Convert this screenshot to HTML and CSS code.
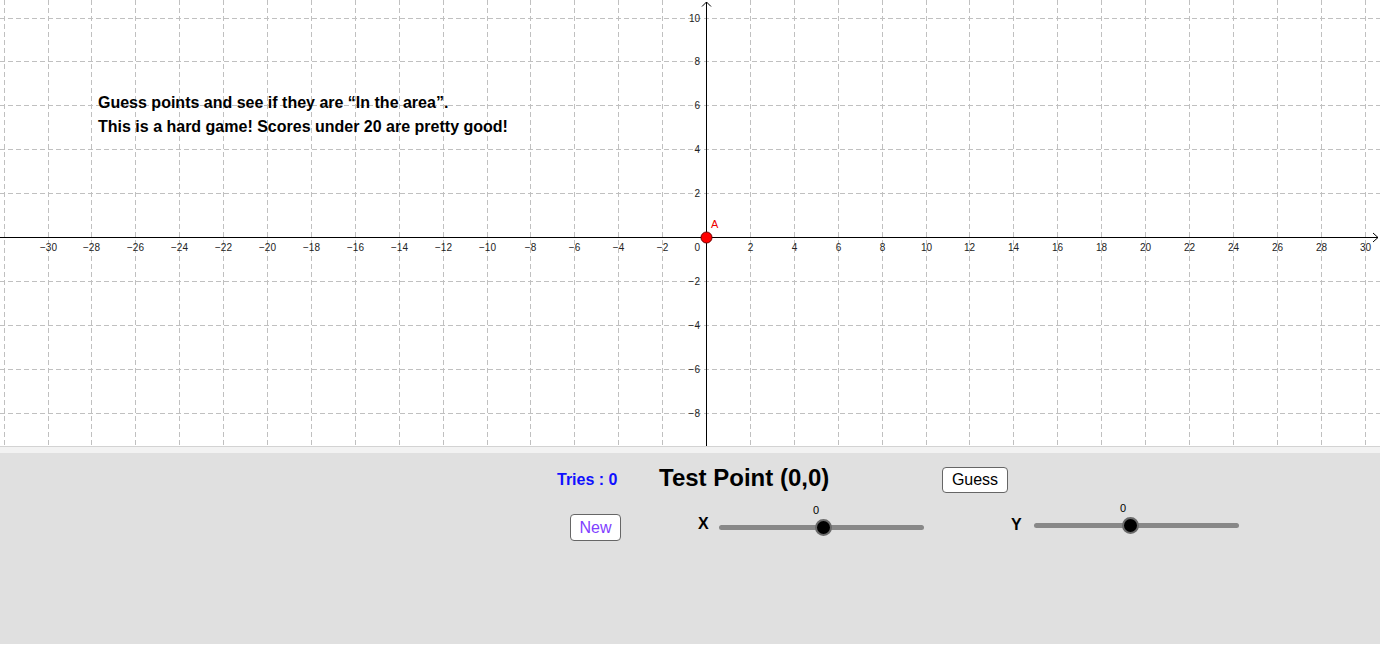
FILE: index.html
```html
<!DOCTYPE html>
<html lang="en">
<head>
  <meta charset="UTF-8">
  <meta name="viewport" content="width=device-width, initial-scale=1.0">
  <title>In the Area</title>
  <link rel="stylesheet" href="styles.css">
</head>
<body>
  <div class="applet">
    <svg class="graph" id="graph" width="1380" height="446" xmlns="http://www.w3.org/2000/svg">
      <g id="grid"></g>
      <g id="axes" stroke="#000" stroke-width="1" fill="none">
        <line x1="0" y1="237.5" x2="1378" y2="237.5"></line>
        <polyline points="1373,233 1378,237.5 1373,242"></polyline>
        <line x1="706.5" y1="2" x2="706.5" y2="446"></line>
        <polyline points="702,6.5 706.5,2 711,6.5"></polyline>
      </g>
      <g id="labels" class="tick-label"></g>
      <circle cx="706.5" cy="237.5" r="5.5" fill="#f00" stroke="#6b0000" stroke-width="1"></circle>
      <text x="711" y="228" class="point-label">A</text>
      <text x="98" y="108" class="intro">Guess points and see if they are “In the area”.</text>
      <text x="98" y="132" class="intro">This is a hard game! Scores under 20 are pretty good!</text>
    </svg>

    <div class="strip"></div>

    <div class="panel">
      <div class="row row-top">
        <span class="tries">Tries : 0</span>
        <span class="title">Test Point (0,0)</span>
        <button class="btn btn-guess">Guess</button>
      </div>

      <div class="row row-bottom">
        <button class="btn btn-new">New</button>
        <span class="axis-name axis-x">X</span>
        <div class="slider slider-x">
          <span class="slider-value">0</span>
          <span class="knob"></span>
        </div>
        <span class="axis-name axis-y">Y</span>
        <div class="slider slider-y">
          <span class="slider-value">0</span>
          <span class="knob"></span>
        </div>
      </div>
    </div>
  </div>

  <script>
    // Build the dashed grid and the tick labels
    const NS = 'http://www.w3.org/2000/svg';
    const ox = 706.5, oy = 237.5, step = 43.9;
    const grid = document.getElementById('grid');
    const labels = document.getElementById('labels');

    function add(parent, tag, attrs, text) {
      const el = document.createElementNS(NS, tag);
      for (const k in attrs) el.setAttribute(k, attrs[k]);
      if (text !== undefined) el.textContent = text;
      parent.appendChild(el);
      return el;
    }

    function num(v) {
      return v < 0 ? '\u2212' + Math.abs(v) : String(v);
    }

    for (let k = -16; k <= 15; k++) {
      const x = Math.round(ox + k * step - 0.5) + 0.5;
      if (k !== 0) {
        add(grid, 'line', { x1: x, y1: 0, x2: x, y2: 446, class: 'grid-line' });
      }
      if (k !== 0 && k >= -15) {
        add(labels, 'text', { x: x, y: 251, 'text-anchor': 'middle' }, num(k * 2));
      }
    }

    for (let j = -4; j <= 5; j++) {
      const y = Math.round(oy - j * step - 0.5) + 0.5;
      if (j !== 0) {
        add(grid, 'line', { x1: 0, y1: y, x2: 1380, y2: y, class: 'grid-line' });
        add(labels, 'text', { x: 700, y: y + 3.5, 'text-anchor': 'end' }, num(j * 2));
      }
    }

    add(labels, 'text', { x: 700, y: 251, 'text-anchor': 'end' }, '0');
  </script>
</body>
</html>
```

FILE: styles.css
```css
/* Page */
body {
  margin: 0;
  padding: 0;
  background: #fff;
  font-family: 'Liberation Sans', Arial, sans-serif;
}

.applet {
  width: 1380px;
}

/* Graphics view */
.graph {
  display: block;
  background: #fff;
}

.grid-line {
  stroke: #c0c0c0;
  stroke-width: 1;
  stroke-dasharray: 5 3;
}

.tick-label {
  font-family: 'Liberation Sans', Arial, sans-serif;
  font-size: 10px;
  fill: #222;
}

.point-label {
  font-family: 'Liberation Sans', Arial, sans-serif;
  font-size: 11px;
  fill: #e00;
}

.intro {
  font-family: 'Liberation Sans', Arial, sans-serif;
  font-size: 16px;
  font-weight: bold;
  fill: #000;
}

/* Divider between views */
.strip {
  height: 6px;
  border-top: 1px solid #d3d3d3;
  background: #f2f2f2;
}

/* Control panel */
.panel {
  height: 191px;
  background: #e0e0e0;
  overflow: hidden;
}

.row {
  display: flex;
  align-items: center;
}

.row-top {
  height: 32px;
  margin-top: 11px;
  padding-left: 557px;
}

.row-bottom {
  height: 31px;
  margin-top: 16px;
  padding-left: 570px;
}

.tries {
  width: 102px;
  font-size: 16px;
  font-weight: bold;
  color: #1010ff;
}

.title {
  width: 283px;
  font-size: 24px;
  font-weight: bold;
  color: #000;
  margin-bottom: 4px;
}

/* Buttons */
.btn {
  font-family: 'Liberation Sans', Arial, sans-serif;
  font-size: 16px;
  background: #fff;
  border: 1px solid #666;
  border-radius: 4px;
  padding: 0;
  margin: 0;
  cursor: pointer;
}

.btn-guess {
  width: 66px;
  height: 26px;
  color: #000;
}

.btn-new {
  width: 51px;
  height: 27px;
  color: #8040ff;
}

/* Sliders */
.axis-name {
  font-size: 16px;
  font-weight: bold;
  color: #000;
}

.axis-x {
  width: 21px;
  margin-left: 77px;
  margin-bottom: 8px;
}

.axis-y {
  width: 23px;
  margin-left: 87px;
  margin-bottom: 6px;
}

.slider {
  position: relative;
  width: 205px;
  height: 5px;
  background: #888;
  border-radius: 3px;
}

.slider-y {
  margin-bottom: 4px;
}

.slider .knob {
  position: absolute;
  top: -6px;
  width: 13px;
  height: 13px;
  background: #000;
  border: 2px solid #6a6a6a;
  border-radius: 50%;
}

.slider .slider-value {
  position: absolute;
  top: -21px;
  width: 20px;
  margin-left: -10px;
  text-align: center;
  font-size: 11px;
  color: #000;
}

.slider-x .knob {
  left: 96px;
}

.slider-x .slider-value {
  left: 97px;
}

.slider-y .knob {
  left: 88px;
}

.slider-y .slider-value {
  left: 89px;
}
```
